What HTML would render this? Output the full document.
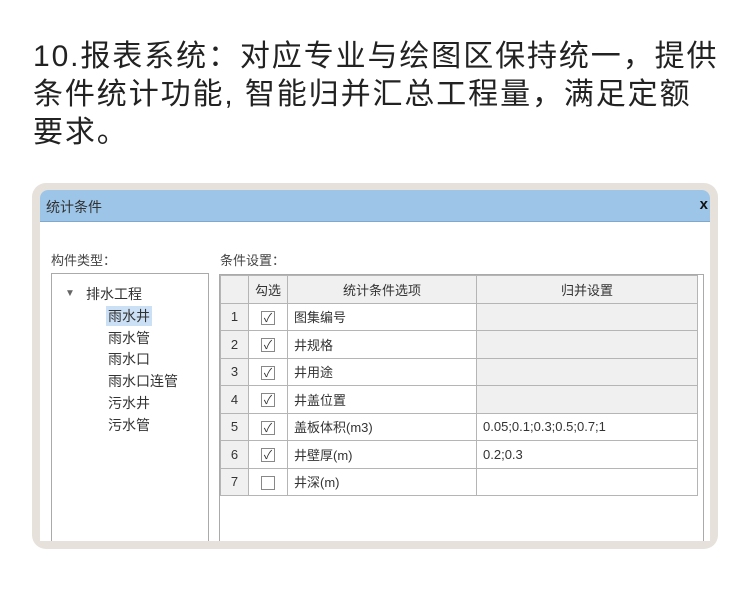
<!DOCTYPE html>
<html><head><meta charset="utf-8"><style>
*{margin:0;padding:0;box-sizing:border-box}
body{width:750px;height:593px;background:#fff;font-family:"Liberation Sans","Noto Sans CJK SC",sans-serif;position:relative;overflow:hidden}
.h{position:absolute;left:33px;top:38px;width:740px;font-size:30px;line-height:38px;color:#222;letter-spacing:1.9px;white-space:nowrap}
.frame{position:absolute;left:32px;top:183px;width:686px;height:366px;background:#e6e1da;border-radius:14px}
.dlg{position:absolute;left:40px;top:190px;width:670px;height:351px;background:#fff;border-radius:8px 8px 0 0;overflow:hidden}
.tb{height:32px;background:#9cc5e8;border-bottom:1px solid #7fa8cc;font-size:14px;color:#333;padding:7px 0 0 6px;position:relative}
.tb b{position:absolute;right:2px;top:6px;font-size:15px;color:#111}
.lbl{position:absolute;font-size:13px;color:#444}
.left{position:absolute;left:11px;top:83px;width:158px;height:270px;border:1px solid #aaa;font-size:14px;color:#333}
.left div{position:absolute;line-height:20px}
table{position:absolute;left:180px;top:85px;border-collapse:collapse;font-size:13px;color:#333}
td{border:1px solid #b5b5b5;height:27.5px;padding:0 6px;white-space:nowrap}
.g{background:#f0f0f0}
.c{text-align:center}
.cb{display:inline-block;width:14px;height:14px;border:1px solid #888;background:#fff;font-size:12px;line-height:12px;text-align:center;color:#333;vertical-align:middle}
.box{position:absolute;left:179px;top:84px;width:485px;height:270px;border:1px solid #aaa}
</style></head><body>
<div class="h">10.报表系统：对应专业与绘图区保持统一，提供<br>条件统计功能, 智能归并汇总工程量，满足定额<br>要求。</div>
<div class="frame"></div>
<div class="dlg">
<div class="tb">统计条件<b>x</b></div>
<div class="lbl" style="left:11px;top:60px">构件类型：</div>
<div class="lbl" style="left:180px;top:60px">条件设置：</div>
<div class="left">
<div style="left:13px;top:10px;font-size:10px;color:#666">▼</div>
<div style="left:34px;top:10px">排水工程</div>
<div style="top:32px;background:#cce0f5;padding:0 2px;left:54px">雨水井</div>
<div style="left:56px;top:54px">雨水管</div>
<div style="left:56px;top:75px">雨水口</div>
<div style="left:56px;top:97px">雨水口连管</div>
<div style="left:56px;top:119px">污水井</div>
<div style="left:56px;top:141px">污水管</div>
</div>
<div class="box"></div>
<table>
<tr class="g"><td style="width:28px"></td><td class="c" style="width:39px">勾选</td><td class="c" style="width:189px">统计条件选项</td><td class="c" style="width:221px">归并设置</td></tr>
<tr><td class="g c">1</td><td class="c"><span class="cb">✓</span></td><td>图集编号</td><td class="g"></td></tr>
<tr><td class="g c">2</td><td class="c"><span class="cb">✓</span></td><td>井规格</td><td class="g"></td></tr>
<tr><td class="g c">3</td><td class="c"><span class="cb">✓</span></td><td>井用途</td><td class="g"></td></tr>
<tr><td class="g c">4</td><td class="c"><span class="cb">✓</span></td><td>井盖位置</td><td class="g"></td></tr>
<tr><td class="g c">5</td><td class="c"><span class="cb">✓</span></td><td>盖板体积(m3)</td><td>0.05;0.1;0.3;0.5;0.7;1</td></tr>
<tr><td class="g c">6</td><td class="c"><span class="cb">✓</span></td><td>井壁厚(m)</td><td>0.2;0.3</td></tr>
<tr><td class="g c">7</td><td class="c"><span class="cb"></span></td><td>井深(m)</td><td></td></tr>
</table>
</div>
</body></html>
